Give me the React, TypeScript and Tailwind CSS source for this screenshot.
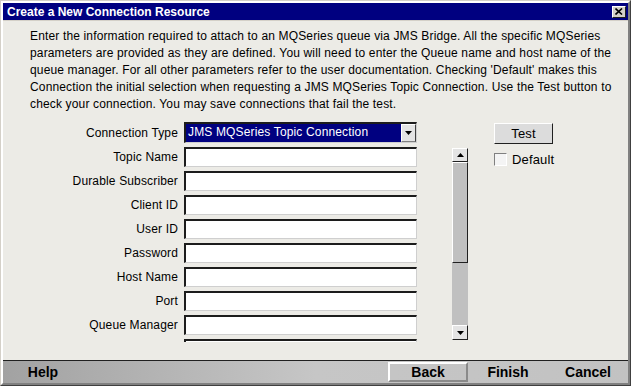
import React from 'react';

const paragraph = [
  'Enter the information required to attach to an MQSeries queue via JMS Bridge. All the specific MQSeries',
  'parameters are provided as they are defined. You will need to enter the Queue name and host name of the',
  "queue manager. For all other parameters refer to the user documentation. Checking 'Default' makes this",
  'Connection the initial selection when requesting a JMS MQSeries Topic Connection. Use the Test button to',
  'check your connection. You may save connections that fail the test.',
];

const fields = [
  'Topic Name',
  'Durable Subscriber',
  'Client ID',
  'User ID',
  'Password',
  'Host Name',
  'Port',
  'Queue Manager',
  '',
];

function Tri({ up }: { up?: boolean }) {
  return (
    <svg width="7" height="4" viewBox="0 0 7 4">
      <polygon points={up ? '3.5,0 7,4 0,4' : '0,0 7,0 3.5,4'} fill="#000" />
    </svg>
  );
}

const sunken =
  'border-t-2 border-l-2 border-b border-r border-t-[#1c1c1c] border-l-[#1c1c1c] border-b-[#cfcfcf] border-r-[#cfcfcf]';
const raised =
  'border-t border-l border-b border-r border-t-white border-l-white border-b-[#202020] border-r-[#202020]';

export default function App() {
  return (
    <div className="w-[631px] h-[386px] border border-t-[#d4d0c8] border-l-[#d4d0c8] border-b-[#404040] border-r-[#404040] bg-[#d4d0c8] font-['Liberation_Sans',Arial,sans-serif] text-[12px] text-black">
      <div className="h-full flex flex-col border-2 border-t-white border-l-white border-b-[#808080] border-r-[#808080]">
        {/* Title bar */}
        <div className="h-[17px] bg-[#000080] flex items-center justify-between pl-[4px] pr-[2px]">
          <span className="text-white font-bold text-[12px] leading-none">Create a New Connection Resource</span>
          <div className={`w-[14px] h-[12px] bg-[#d4d0c8] flex items-center justify-center ${raised}`}>
            <svg width="8" height="7" viewBox="0 0 8 7">
              <path d="M0.5 0.5 L7 6.5 M7 0.5 L0.5 6.5" stroke="#000" strokeWidth="1.6" />
            </svg>
          </div>
        </div>

        {/* Content */}
        <div className="flex-1 bg-[#ecebe6] pt-[7px] pl-[27px] mt-[1px] tracking-[0.15px]">
          <div className="leading-[17px]">
            {paragraph.map((l, i) => (
              <div key={i} className="whitespace-nowrap">{l}</div>
            ))}
          </div>

          <div className="flex items-start mt-[9px]">
            <div className="w-[438px]">
              {/* Connection type */}
              <div className="flex items-center h-[21px]">
                <div className="w-[149px] text-right pr-[1px]">Connection Type</div>
                <div className={`ml-[5px] w-[233px] h-[21px] flex bg-[#000080] ${sunken}`}>
                  <div className="flex-1 text-white pl-[2px] leading-[17px] whitespace-nowrap">JMS MQSeries Topic Connection</div>
                  <div className="w-[15px] h-full bg-[#e4e4e4] flex items-center justify-center border-l border-t border-l-white border-t-white border-r border-b border-r-[#404040] border-b-[#808080]">
                    <Tri />
                  </div>
                </div>
              </div>

              {/* Scrolling list */}
              <div className="flex items-start mt-[4px]">
                <div className="w-[387px] h-[195px] overflow-hidden flex flex-col gap-[4px]">
                  {fields.map((f, i) => (
                    <div key={i} className="flex items-center h-[20px] shrink-0">
                      <div className="w-[149px] text-right pr-[1px] whitespace-nowrap">{f}</div>
                      <div className={`ml-[5px] w-[233px] h-[20px] bg-white ${sunken}`} />
                    </div>
                  ))}
                </div>
                <div className="ml-[35px] mt-[1px] w-[16px] h-[192px] flex flex-col bg-[#c0c0c0]">
                  <div className={`h-[14px] bg-[#e4e4e4] flex items-center justify-center ${raised}`}>
                    <Tri up />
                  </div>
                  <div className={`h-[101px] bg-[#c0c0c0] ${raised}`} />
                  <div className="flex-1" />
                  <div className={`h-[15px] bg-[#e4e4e4] flex items-center justify-center ${raised}`}>
                    <Tri />
                  </div>
                </div>
              </div>
            </div>

            {/* Right side */}
            <div className="ml-[26px] mt-[1px] flex flex-col">
              <button className={`w-[59px] h-[21px] bg-[#dcdcdc] ${raised} text-[13px]`}>Test</button>
              <label className="flex items-center mt-[6px]">
                <span className="w-[13px] h-[13px] bg-[#f4f4f4] border border-t-[#808080] border-l-[#808080] border-b-white border-r-white" />
                <span className="ml-[5px] text-[13px]">Default</span>
              </label>
            </div>
          </div>
        </div>

        {/* Bottom bar */}
        <div className="h-[23px] border-t border-t-[#202020] bg-gradient-to-r from-[#a2a2a2] via-[#c6c6c6] to-[#c2c2c2] flex items-center font-bold text-[14px]">
          <div className="w-[80px] text-center">Help</div>
          <div className="flex-1" />
          <div className="w-[80px] h-[20px] flex items-center justify-center border-2 border-t-white border-l-white border-b-[#8a8a8a] border-r-[#8a8a8a]">Back</div>
          <div className="w-[80px] text-center">Finish</div>
          <div className="w-[80px] text-center">Cancel</div>
        </div>
      </div>
    </div>
  );
}
